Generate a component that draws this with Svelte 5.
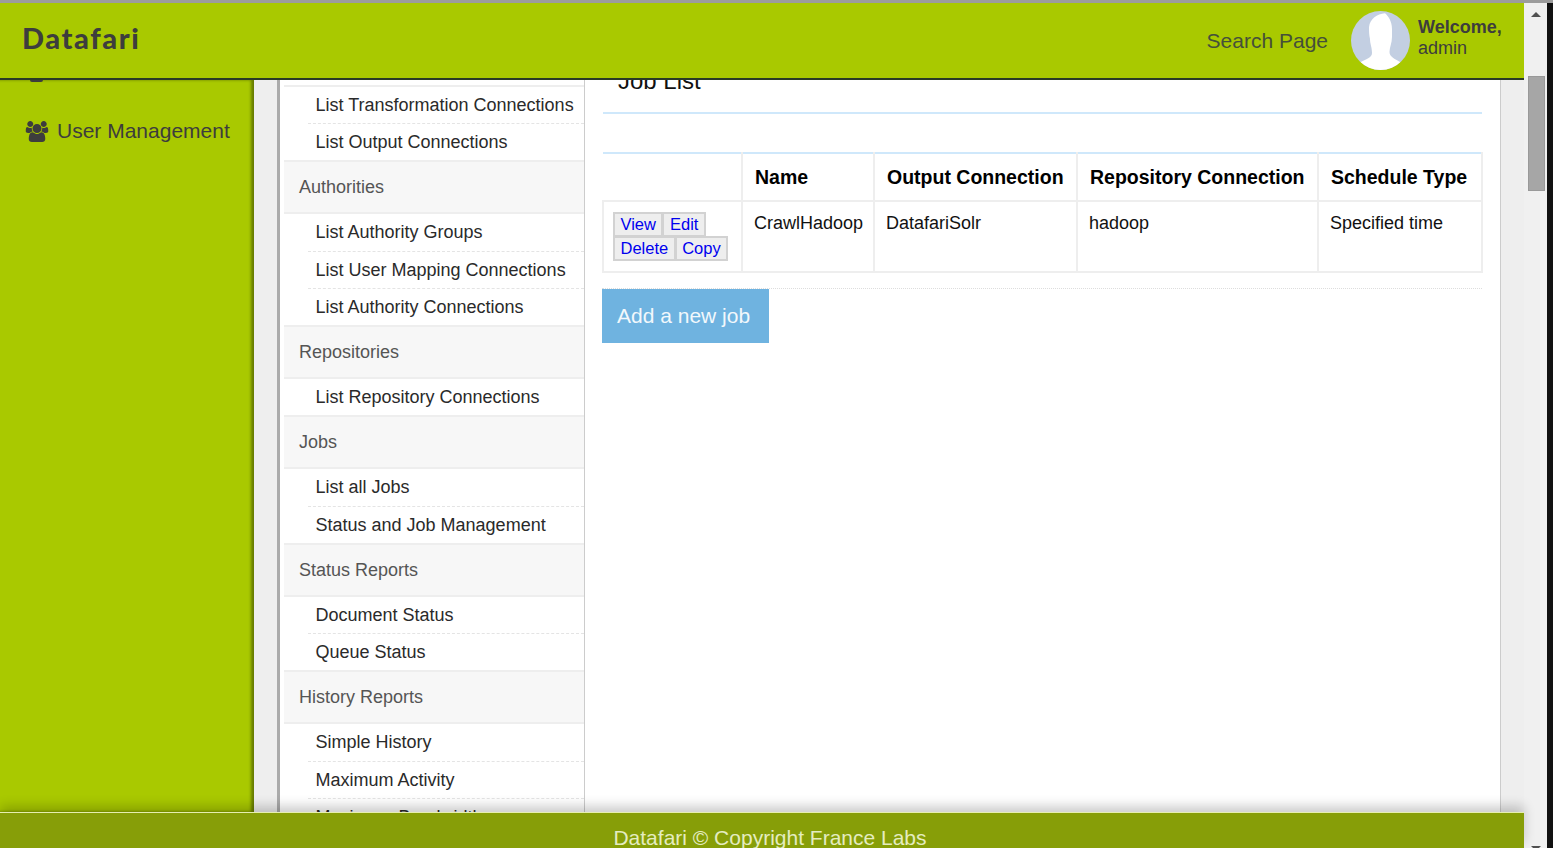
<script lang="ts">
    interface NavGroup {
        title?: string;
        links: string[];
    }

    const navGroups: NavGroup[] = [
        { links: ['List Transformation Connections', 'List Output Connections'] },
        { title: 'Authorities', links: ['List Authority Groups', 'List User Mapping Connections', 'List Authority Connections'] },
        { title: 'Repositories', links: ['List Repository Connections'] },
        { title: 'Jobs', links: ['List all Jobs', 'Status and Job Management'] },
        { title: 'Status Reports', links: ['Document Status', 'Queue Status'] },
        { title: 'History Reports', links: ['Simple History', 'Maximum Activity', 'Maximum Bandwidth'] },
    ];

    const columns = ['', 'Name', 'Output Connection', 'Repository Connection', 'Schedule Type'];
</script>

<div class="window">
    <div class="page">
        <header class="topbar">
            <div class="logo">Datafari</div>
            <a class="search-link" href="#search">Search Page</a>
            <svg class="avatar" viewBox="0 0 59 59" aria-hidden="true">
                <defs><clipPath id="disc"><circle cx="29.5" cy="29.5" r="29.5" /></clipPath></defs>
                <g clip-path="url(#disc)">
                    <rect width="59" height="59" fill="#c3cfe2" />
                    <path fill="#fff" d="M34 2.300 C37 5 41 10 41 18 L41 26 C41 32 38.500 36 38.500 41 C38.500 46 44 48 50 51.500 L50 59 L9 59 L9 51.500 C15 48 21 47 21 42 C21 36 19 33 19 28 C18 24 18 20 18 16 C19 8 26 3 34 2.300 Z" />
                </g>
            </svg>
            <div class="welcome">
                <strong>Welcome,</strong>
                <span>admin</span>
            </div>
        </header>

        <div class="body">
            <aside class="sidebar">
                <div class="clipped-icon"></div>
                <a class="side-item" href="#users">
                    <svg viewBox="0 0 2048 1792" aria-hidden="true">
                        <path fill="currentColor" d="M657 896q-162 5-265 128h-134q-82 0-138-40.500t-56-118.500q0-353 124-353 6 0 43.500 21t97.500 42.500 119 21.500q67 0 133-23-5 37-5 66 0 139 81 256zm1071 637q0 120-73 189.500t-194 69.500h-874q-121 0-194-69.500t-73-189.500q0-53 3.500-103.500t14-109 26.500-108.500 43-97.500 62-81 85.500-53.500 111.500-20q10 0 43 21.500t73 48 107 48 135 21.500 135-21.500 107-48 73-48 43-21.500q61 0 111.500 20t85.500 53.500 62 81 43 97.500 26.500 108.500 14 109 3.500 103.500zm-1024-1277q0 106-75 181t-181 75-181-75-75-181 75-181 181-75 181 75 75 181zm704 384q0 159-112.500 271.500t-271.500 112.500-271.500-112.500-112.500-271.500 112.500-271.500 271.500-112.500 271.500 112.500 112.500 271.500zm576 225q0 78-56 118.500t-138 40.500h-134q-103-123-265-128 81-117 81-256 0-29-5-66 66 23 133 23 59 0 119-21.500t97.500-42.500 43.500-21q124 0 124 353zm-128-609q0 106-75 181t-181 75-181-75-75-181 75-181 181-75 181 75 75 181z" />
                    </svg>
                    <span>User Management</span>
                </a>
            </aside>

            <nav class="menu">
                {#each navGroups as group}
                    <section class="group">
                        {#if group.title}
                            <div class="group-title">{group.title}</div>
                        {/if}
                        {#each group.links as link}
                            <a class="menu-link" href="#link">{link}</a>
                        {/each}
                    </section>
                {/each}
            </nav>

            <main class="content">
                <h1>Job List</h1>
                <div class="title-rule"></div>
                <table>
                    <colgroup>
                        <col style="width: 139px" />
                        <col style="width: 132px" />
                        <col style="width: 203px" />
                        <col style="width: 241px" />
                        <col style="width: 164px" />
                    </colgroup>
                    <thead>
                        <tr>
                            {#each columns as col}
                                <th>{col}</th>
                            {/each}
                        </tr>
                    </thead>
                    <tbody>
                        <tr>
                            <td class="actions">
                                <div class="btn-row"><a href="#view">View</a><a href="#edit">Edit</a></div>
                                <div class="btn-row"><a href="#delete">Delete</a><a href="#copy">Copy</a></div>
                            </td>
                            <td>CrawlHadoop</td>
                            <td>DatafariSolr</td>
                            <td>hadoop</td>
                            <td>Specified time</td>
                        </tr>
                    </tbody>
                </table>
                <div class="dotted-rule"></div>
                <button class="add-job" type="button">Add a new job</button>
            </main>

            <div class="gutter"></div>
        </div>

        <footer class="footer">Datafari © Copyright France Labs</footer>
    </div>

    <div class="scrollbar">
        <span class="arrow up"></span>
        <div class="thumb"></div>
        <span class="arrow down"></span>
    </div>
    <div class="edge"></div>
</div>

<style>
    :global(body) {
        margin: 0;
        overflow: hidden;
        font-family: "Liberation Sans", Arial, sans-serif;
    }

    .window {
        display: flex;
        height: 848px;
        border-top: 3px solid #9c9c9c;
        box-sizing: border-box;
        overflow: hidden;
    }

    .page {
        width: 1524px;
        display: flex;
        flex-direction: column;
        height: 100%;
    }

    /* top bar */
    .topbar {
        position: relative;
        z-index: 2;
        flex: none;
        height: 77px;
        box-sizing: border-box;
        display: flex;
        align-items: center;
        background: #a9c900;
        border-bottom: 2px solid #2a3a26;
        padding: 0 22px 0 22px;
        color: #3d3d3d;
    }

    .logo {
        font-family: Lato, sans-serif;
        font-weight: 900;
        font-size: 29px;
        margin-top: -6px;
        margin-right: auto;
        letter-spacing: 1.600px;
    }

    .search-link {
        color: #45503a;
        font-size: 21px;
        text-decoration: none;
    }

    .avatar {
        width: 59px;
        height: 59px;
        margin: 0 8px 0 23px;
    }

    .welcome {
        display: flex;
        flex-direction: column;
        width: 84px;
        margin-top: -6px;
        font-size: 18px;
        line-height: 21px;
    }

    /* middle */
    .body {
        flex: 1;
        min-height: 0;
        display: flex;
        overflow: hidden;
        background: #eee;
    }

    .sidebar {
        flex: none;
        width: 254px;
        background: #a9c900;
        box-shadow: inset -3px 0 3px rgba(50, 60, 0, 0.55);
        color: #3d3d3d;
    }

    .clipped-icon {
        width: 13px;
        height: 2px;
        margin-left: 30px;
        background: #3d3d3d;
        border-radius: 0 0 7px 7px;
    }

    .side-item {
        display: flex;
        align-items: center;
        gap: 8.500px;
        margin: 36px 0 0 24.500px;
        height: 26px;
        color: inherit;
        font-size: 21px;
        text-decoration: none;
    }

    .side-item svg {
        width: 24px;
        height: 21px;
    }

    .menu {
        flex: none;
        width: 308px;
        margin-left: 23px;
        box-sizing: border-box;
        background: #fff;
        border-left: 3px solid #aaa;
        border-right: 1px solid #ccc;
        padding: 4.600px 0 0 4px;
        height: 100%;
        overflow: hidden;
    }

    .group {
        border-bottom: 2px solid #eee;
    }

    .group:first-child {
        border-top: 2px solid #eee;
    }

    .group-title {
        height: 52px;
        box-sizing: border-box;
        background: #f7f7f7;
        border-bottom: 2px solid #eee;
        color: #555;
        font-size: 18px;
        line-height: 50px;
        padding-left: 15px;
    }

    .menu-link {
        display: block;
        height: 37.500px;
        box-sizing: border-box;
        margin-left: 24px;
        padding-left: 7.500px;
        border-bottom: 1px dashed #e4e4e4;
        color: #2a2a2a;
        font-size: 18px;
        line-height: 36px;
        text-decoration: none;
        white-space: nowrap;
    }

    .menu-link:last-child {
        border-bottom: none;
        height: 36px;
    }

    .content {
        flex: none;
        width: 915px;
        box-sizing: border-box;
        background: #fff;
        padding: 0 18px 0 16px;
    }

    h1 {
        margin: -13px 0 0 17px;
        font-size: 24px;
        font-weight: 400;
        line-height: 28px;
        color: #111;
    }

    .title-rule {
        height: 2px;
        margin: 17px 0 0 2px;
        background: #cfe8fb;
    }

    table {
        width: 879px;
        margin: 38px 0 0 1px;
        border-collapse: collapse;
        table-layout: fixed;
        border-top: 2px solid #cfe8fb;
        color: #111;
    }

    th {
        height: 46px;
        padding: 0 0 0 12px;
        text-align: left;
        font-size: 19.500px;
        color: #000;
        border: 2px solid #eee;
        border-top: none;
    }

    th:first-child {
        border-left: none;
    }

    td {
        height: 71px;
        padding: 9px 0 0 11px;
        box-sizing: border-box;
        vertical-align: top;
        font-size: 18px;
        line-height: 24px;
        border: 2px solid #eee;
    }

    td.actions {
        padding: 10px 0 0 9px;
    }

    .btn-row {
        display: flex;
        height: 24px;
    }

    .btn-row a {
        display: block;
        box-sizing: border-box;
        height: 25px;
        padding: 0 5.500px;
        background: #eee;
        border: 2px solid #d2d2d2;
        color: #0000ee;
        font-size: 16.500px;
        line-height: 20px;
        text-decoration: none;
    }

    .btn-row a + a {
        margin-left: -1px;
    }

    .dotted-rule {
        width: 880px;
        margin: 15px 0 0 1px;
        border-top: 1px dotted #ddd;
    }

    .add-job {
        display: block;
        width: 167px;
        height: 54px;
        margin-left: 1px;
        padding: 0 0 0 15px;
        border: none;
        background: #6fb3e0;
        color: #f2f8fc;
        font-family: inherit;
        font-size: 21px;
        text-align: left;
    }

    .gutter {
        flex: 1;
        border-left: 1px solid #ccc;
    }

    .footer {
        position: relative;
        z-index: 2;
        flex: none;
        height: 36px;
        box-sizing: border-box;
        background: #879e08;
        border-top: 1px solid #e6eeb0;
        box-shadow: 0 -6px 12px rgba(0, 0, 0, 0.2);
        color: #e4ecc0;
        font-size: 21px;
        line-height: 50px;
        padding-left: 16px;
        text-align: center;
        overflow: hidden;
    }

    /* fake browser scrollbar */
    .scrollbar {
        position: relative;
        flex: none;
        width: 23px;
        background: #f0f0f0;
    }

    .thumb {
        width: 17px;
        height: 115px;
        margin: 73px 0 0 4px;
        box-sizing: border-box;
        background: #a6a6a6;
        border: 1px solid #999;
    }

    .arrow {
        position: absolute;
        left: 7px;
        width: 0;
        height: 0;
        border-left: 5px solid transparent;
        border-right: 5px solid transparent;
    }

    .arrow.up {
        top: 9px;
        border-bottom: 5px solid #505050;
    }

    .arrow.down {
        bottom: -3px;
        border-top: 5px solid #505050;
    }

    .edge {
        flex: 1;
        background: #111;
    }
</style>
